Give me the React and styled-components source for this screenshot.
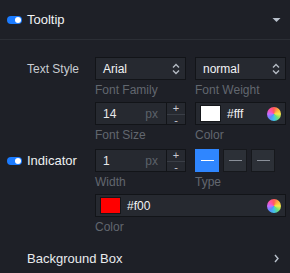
import React from "react";
import styled, { createGlobalStyle } from "styled-components";

const Global = createGlobalStyle`
  html, body { margin: 0; padding: 0; background: #1e2027; }
  body { font-family: "Liberation Sans", Arial, sans-serif; }
`;

const Panel = styled.div`
  width: 290px;
  height: 273px;
  background: #1e2027;
  color: #e6e8eb;
  overflow: hidden;
`;

const Header = styled.div`
  height: 39px;
  display: flex;
  align-items: center;
  padding: 0 9px 0 7px;
  border-bottom: 1px solid #2b2e35;
`;

const Title = styled.span`
  font-size: 13px;
  color: #f2f3f5;
  margin-left: 5px;
  flex: 1;
`;

const Toggle = styled.span`
  position: relative;
  display: inline-block;
  width: 15px;
  height: 8px;
  border-radius: 4px;
  background: #1b7bff;
  flex: none;
  &::after {
    content: "";
    position: absolute;
    right: 1px;
    top: 1px;
    width: 6px;
    height: 6px;
    border-radius: 50%;
    background: #fff;
  }
`;

const Body = styled.div`
  padding-top: 17px;
`;

const Row = styled.div`
  display: flex;
  align-items: flex-start;
  margin-top: ${(p) => (p.$gap ? "2px" : "0")};
`;

const Label = styled.div`
  width: ${(p) => (p.$toggle ? "88px" : "68px")};
  padding-left: ${(p) => (p.$toggle ? "7px" : "27px")};
  height: 23px;
  display: flex;
  align-items: center;
  gap: 5px;
  font-size: ${(p) => (p.$toggle ? "13px" : "12px")};
  color: ${(p) => (p.$toggle ? "#eef0f2" : "#c8ccd2")};
  flex: none;
`;

const Controls = styled.div`
  display: grid;
  grid-template-columns: 91px 91px;
  column-gap: 9px;
`;

const Field = styled.div`
  grid-column: ${(p) => (p.$wide ? "1 / span 2" : "auto")};
  display: flex;
  flex-direction: column;
`;

const Caption = styled.div`
  height: 22px;
  line-height: 21px;
  font-size: 12px;
  color: #62676f;
`;

const Box = styled.div`
  height: 23px;
  box-sizing: border-box;
  border: 1px solid #121418;
  background: #262930;
  display: flex;
  align-items: center;
`;

const Select = styled(Box)`
  padding: 0 5px 0 7px;
  font-size: 12px;
  color: #f2f3f5;
  justify-content: space-between;
`;

const Num = styled(Box)`
  flex: 1;
  padding: 0 8px 0 7px;
  font-size: 12px;
  justify-content: space-between;
`;

const Unit = styled.span`
  color: #5c626a;
  font-size: 12px;
`;

const NumWrap = styled.div`
  display: flex;
`;

const Stepper = styled.div`
  width: 19px;
  height: 23px;
  box-sizing: border-box;
  border: 1px solid #121418;
  border-left: none;
  background: #262930;
  display: flex;
  flex-direction: column;
`;

const Step = styled.div`
  flex: 1;
  display: flex;
  align-items: center;
  justify-content: center;
  font-size: 11px;
  line-height: 1;
  color: #c6cad0;
  & + & { border-top: 1px solid #3a3e46; }
`;

const ColorBox = styled(Box)`
  padding: 0 4px;
  font-size: 12px;
  color: #f2f3f5;
`;

const Swatch = styled.span`
  width: 21px;
  height: 17px;
  box-sizing: border-box;
  border: 1px solid #15171b;
  background: ${(p) => p.$c};
  margin-right: 6px;
  flex: none;
`;

const Wheel = styled.span`
  margin-left: auto;
  width: 14px;
  height: 14px;
  border-radius: 50%;
  background: conic-gradient(#ff5a5a, #ffb13d, #f5e94a, #6ede74, #3fc4e8, #5b8cff, #c46cff, #ff4fa8, #ff5a5a);
`;

const TypeGroup = styled.div`
  display: flex;
  gap: 4px;
`;

const TypeBtn = styled.div`
  width: 24px;
  height: 23px;
  box-sizing: border-box;
  border: 1px solid ${(p) => (p.$active ? "#2f86ff" : "#16181c")};
  background: ${(p) => (p.$active ? "#2f86ff" : "#2c3037")};
  display: flex;
  align-items: center;
  justify-content: center;
  &::after {
    content: "";
    width: 13px;
    height: 1px;
    background: ${(p) => (p.$active ? "#ffffff" : "#8a9099")};
  }
`;

const Footer = styled.div`
  margin-top: 9px;
  height: 20px;
  display: flex;
  align-items: center;
  padding: 0 11px 0 27px;
  font-size: 13px;
  color: #e9ebee;
  justify-content: space-between;
`;

const UpDown = () => (
  <svg width="8" height="12" viewBox="0 0 8 12">
    <path d="M1 4.5 L4 1.5 L7 4.5" fill="none" stroke="#b4bac3" strokeWidth="1.4" />
    <path d="M1 7.5 L4 10.5 L7 7.5" fill="none" stroke="#b4bac3" strokeWidth="1.4" />
  </svg>
);

const ChevDown = () => (
  <svg width="9" height="6" viewBox="0 0 9 6">
    <path d="M0.5 1 L4.5 5 L8.5 1 Z" fill="#b9c1cc" />
  </svg>
);

const ChevRight = () => (
  <svg width="5" height="9" viewBox="0 0 5 9">
    <path d="M1 1 L4 4.5 L1 8" fill="none" stroke="#b9c1cc" strokeWidth="1.4" />
  </svg>
);

export default function App() {
  return (
    <>
      <Global />
      <Panel>
        <Header>
          <Toggle />
          <Title>Tooltip</Title>
          <ChevDown />
        </Header>
        <Body>
          <Row>
            <Label>Text Style</Label>
            <Controls>
              <Field>
                <Select>
                  <span>Arial</span>
                  <UpDown />
                </Select>
                <Caption>Font Family</Caption>
              </Field>
              <Field>
                <Select>
                  <span>normal</span>
                  <UpDown />
                </Select>
                <Caption>Font Weight</Caption>
              </Field>
              <Field>
                <NumWrap>
                  <Num>
                    <span>14</span>
                    <Unit>px</Unit>
                  </Num>
                  <Stepper>
                    <Step>+</Step>
                    <Step>-</Step>
                  </Stepper>
                </NumWrap>
                <Caption>Font Size</Caption>
              </Field>
              <Field>
                <ColorBox>
                  <Swatch $c="#ffffff" />
                  <span>#fff</span>
                  <Wheel />
                </ColorBox>
                <Caption>Color</Caption>
              </Field>
            </Controls>
          </Row>
          <Row $gap>
            <Label $toggle>
              <Toggle />
              Indicator
            </Label>
            <Controls>
              <Field>
                <NumWrap>
                  <Num>
                    <span>1</span>
                    <Unit>px</Unit>
                  </Num>
                  <Stepper>
                    <Step>+</Step>
                    <Step>-</Step>
                  </Stepper>
                </NumWrap>
                <Caption>Width</Caption>
              </Field>
              <Field>
                <TypeGroup>
                  <TypeBtn $active />
                  <TypeBtn />
                  <TypeBtn />
                </TypeGroup>
                <Caption>Type</Caption>
              </Field>
              <Field $wide>
                <ColorBox>
                  <Swatch $c="#ff0000" />
                  <span>#f00</span>
                  <Wheel />
                </ColorBox>
                <Caption>Color</Caption>
              </Field>
            </Controls>
          </Row>
        </Body>
        <Footer>
          <span>Background Box</span>
          <ChevRight />
        </Footer>
      </Panel>
    </>
  );
}
